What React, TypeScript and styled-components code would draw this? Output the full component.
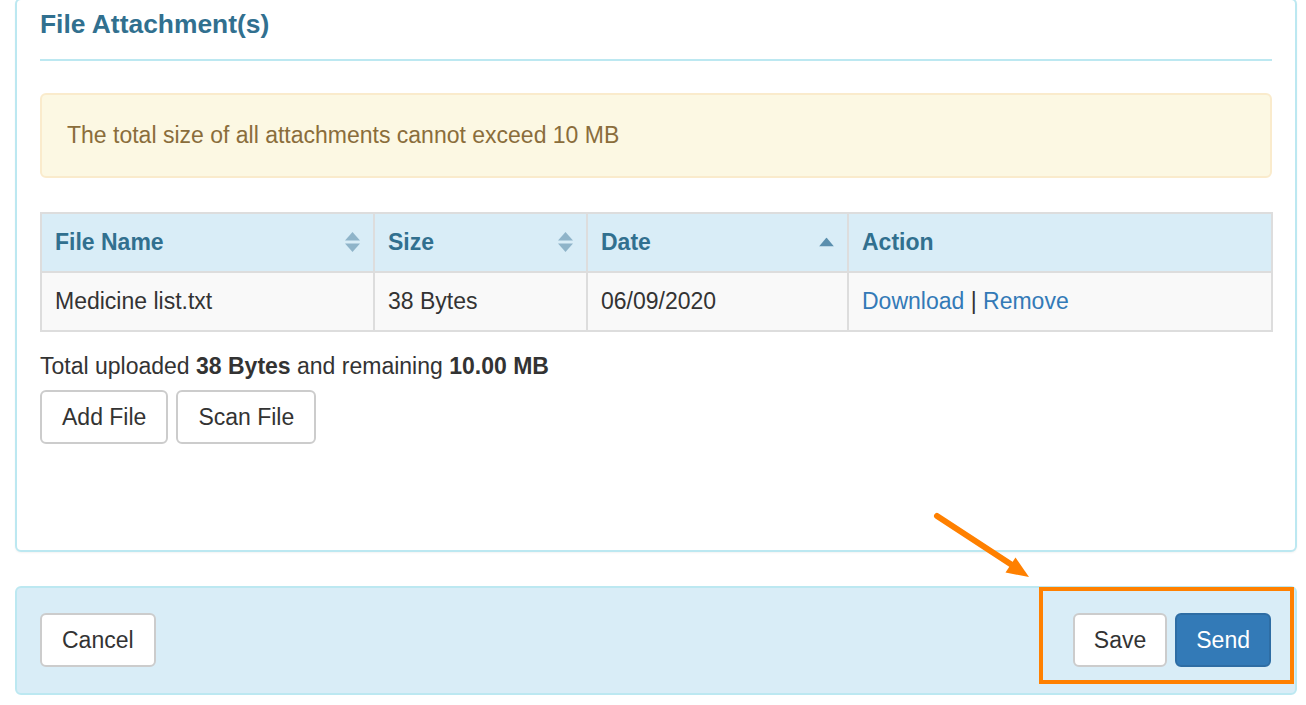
import React from "react";
import styled, { createGlobalStyle } from "styled-components";

const colors = {
  INFO_BG: "#d9edf7",
  INFO_BORDER: "#bce8f1",
  INFO_TEXT: "#31708f",
  WARN_BG: "#fcf8e3",
  WARN_BORDER: "#faebcc",
  WARN_TEXT: "#8a6d3b",
  PRIMARY: "#337ab7",
  PRIMARY_BORDER: "#2e6da4",
  TEXT: "#333333",
  GRID: "#dddddd",
  HIGHLIGHT: "#ff8000",
};

const GlobalStyle = createGlobalStyle`
  html, body {
    margin: 0;
    padding: 0;
    background: #fff;
  }
  body {
    font-family: "Liberation Sans", Arial, sans-serif;
    font-size: 23px;
    line-height: 1.42857;
    color: ${colors.TEXT};
  }
  * { box-sizing: border-box; }
`;

const Page = styled.div`
  position: relative;
  width: 1306px;
  height: 705px;
  overflow: hidden;
  padding: 0 9px 0 15px;
`;

const Panel = styled.section`
  margin-top: -2px;
  border: 2px solid ${colors.INFO_BORDER};
  border-radius: 6px;
  background: #fff;
  padding: 10px 23px 106px;
  box-shadow: 0 1px 2px rgba(0, 0, 0, 0.05);
`;

const Heading = styled.h3`
  margin: 0;
  font-size: 26.4px;
  line-height: 1.1;
  font-weight: bold;
  color: ${colors.INFO_TEXT};
`;

const Rule = styled.hr`
  margin: 20px 0 32px;
  border: 0;
  border-top: 2px solid ${colors.INFO_BORDER};
`;

const Alert = styled.div`
  background: ${colors.WARN_BG};
  border: 2px solid ${colors.WARN_BORDER};
  border-radius: 6px;
  color: ${colors.WARN_TEXT};
  padding: 24px 25px;
  margin-bottom: 34px;
`;

const Table = styled.table`
  width: 100%;
  border-collapse: collapse;
  border: 2px solid ${colors.GRID};
  table-layout: fixed;
`;

const Th = styled.th`
  position: relative;
  text-align: left;
  font-weight: bold;
  color: ${colors.INFO_TEXT};
  background: ${colors.INFO_BG};
  border: 2px solid ${colors.GRID};
  padding: 12px 13px;
`;

const Td = styled.td`
  background: #f9f9f9;
  border: 2px solid ${colors.GRID};
  padding: 12px 13px;
`;

const SortIcon = styled.svg`
  position: absolute;
  right: 13px;
  top: 50%;
  transform: translateY(-50%);
`;

const Link = styled.a`
  color: ${colors.PRIMARY};
  text-decoration: none;
  cursor: pointer;
`;

const Summary = styled.p`
  margin: 18px 0 8px;
`;

const ButtonRow = styled.div<{ $gap: number }>`
  display: flex;
  gap: ${(p) => p.$gap}px;
`;

const Button = styled.button<{ $primary?: boolean; $pad?: number }>`
  height: 54px;
  padding: 0 ${(p) => p.$pad ?? 20}px;
  font-family: inherit;
  font-size: 23px;
  border-radius: 6px;
  border: 2px solid ${(p) => (p.$primary ? colors.PRIMARY_BORDER : "#cccccc")};
  background: ${(p) => (p.$primary ? colors.PRIMARY : "#fff")};
  color: ${(p) => (p.$primary ? "#fff" : colors.TEXT)};
  cursor: pointer;
`;

const Footer = styled.footer`
  margin-top: 34px;
  background: ${colors.INFO_BG};
  border: 2px solid ${colors.INFO_BORDER};
  border-radius: 6px;
  padding: 25px 24px 26px 23px;
  display: flex;
  justify-content: space-between;
  align-items: center;
`;

const Highlight = styled.div`
  position: absolute;
  left: 1039px;
  top: 587px;
  width: 255px;
  height: 97px;
  border: 4px solid ${colors.HIGHLIGHT};
  pointer-events: none;
`;

const Overlay = styled.svg`
  position: absolute;
  left: 0;
  top: 0;
  pointer-events: none;
`;

type Sort = "both" | "asc" | "none";

const SortArrows = ({ sort }: { sort: Sort }) => {
  if (sort === "none") return null;
  if (sort === "asc")
    return (
      <SortIcon width="15" height="9" viewBox="0 0 15 9">
        <polygon points="7.5,0 15,9 0,9" fill="#5b8fae" />
      </SortIcon>
    );
  return (
    <SortIcon width="15" height="20" viewBox="0 0 15 20">
      <polygon points="7.5,0 15,8.5 0,8.5" fill="#8fb4c9" />
      <polygon points="0,11.5 15,11.5 7.5,20" fill="#8fb4c9" />
    </SortIcon>
  );
};

const columns: { label: string; width: number; sort: Sort }[] = [
  { label: "File Name", width: 333, sort: "both" },
  { label: "Size", width: 213, sort: "both" },
  { label: "Date", width: 261, sort: "asc" },
  { label: "Action", width: 424, sort: "none" },
];

const files = [{ name: "Medicine list.txt", size: "38 Bytes", date: "06/09/2020" }];

export default function App() {
  return (
    <>
      <GlobalStyle />
      <Page>
        <Panel>
          <Heading>File Attachment(s)</Heading>
          <Rule />
          <Alert>The total size of all attachments cannot exceed 10 MB</Alert>
          <Table>
            <colgroup>
              {columns.map((c) => (
                <col key={c.label} style={{ width: c.width }} />
              ))}
            </colgroup>
            <thead>
              <tr>
                {columns.map((c) => (
                  <Th key={c.label}>
                    {c.label}
                    <SortArrows sort={c.sort} />
                  </Th>
                ))}
              </tr>
            </thead>
            <tbody>
              {files.map((f) => (
                <tr key={f.name}>
                  <Td>{f.name}</Td>
                  <Td>{f.size}</Td>
                  <Td>{f.date}</Td>
                  <Td>
                    <Link>Download</Link> | <Link>Remove</Link>
                  </Td>
                </tr>
              ))}
            </tbody>
          </Table>
          <Summary>
            Total uploaded <b>38 Bytes</b> and remaining <b>10.00 MB</b>
          </Summary>
          <ButtonRow $gap={8}>
            <Button>Add File</Button>
            <Button>Scan File</Button>
          </ButtonRow>
        </Panel>
        <Footer>
          <Button>Cancel</Button>
          <ButtonRow $gap={8}>
            <Button $pad={19}>Save</Button>
            <Button $primary $pad={19}>
              Send
            </Button>
          </ButtonRow>
        </Footer>
        <Highlight />
        <Overlay width="1306" height="705" viewBox="0 0 1306 705">
          <line
            x1="937"
            y1="516"
            x2="1012"
            y2="565"
            stroke={colors.HIGHLIGHT}
            strokeWidth="6"
            strokeLinecap="round"
          />
          <polygon points="1029,577 1005.5,572.5 1015.5,557.5" fill={colors.HIGHLIGHT} />
        </Overlay>
      </Page>
    </>
  );
}
